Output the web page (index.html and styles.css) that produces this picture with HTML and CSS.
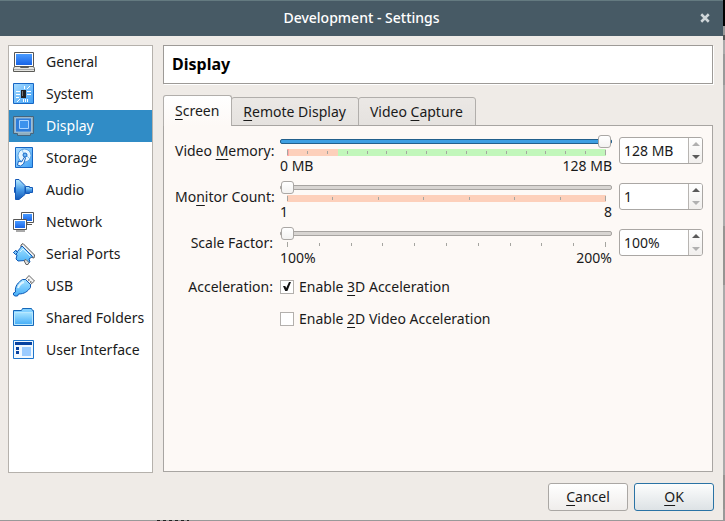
FILE: index.html
```html
<!DOCTYPE html>
<html lang="en">
<head>
<meta charset="utf-8">
<title>Development - Settings</title>
<link rel="stylesheet" href="styles.css">
</head>
<body>
<svg class="defs" aria-hidden="true">
  <defs>
    <linearGradient id="blue" x1="0" y1="0" x2="0" y2="1"><stop offset="0" stop-color="#4a9bff"/><stop offset="1" stop-color="#1763e6"/></linearGradient>
    <linearGradient id="sky" x1="0" y1="0" x2="1" y2="1"><stop offset="0" stop-color="#a8dcff"/><stop offset="1" stop-color="#3d9ff5"/></linearGradient>
    <linearGradient id="folder" x1="0" y1="0" x2="0" y2="1"><stop offset="0" stop-color="#a6e3ff"/><stop offset="1" stop-color="#45aef8"/></linearGradient>
    <linearGradient id="cone" x1="0" y1="0" x2="0" y2="1"><stop offset="0" stop-color="#b9ecff"/><stop offset=".5" stop-color="#4a9de8"/><stop offset="1" stop-color="#1459b8"/></linearGradient>
  </defs>
</svg>
<main class="dialog">
  <header class="titlebar">
    <h1>Development - Settings</h1>
    <button class="close" aria-label="Close"><svg viewBox="0 0 8 8"><path d="M1 1l6 6M7 1L1 7"/></svg></button>
  </header>
  <div class="content">
    <nav class="sidebar">
      <a href="#general"><svg viewBox="0 0 22 22"><path d="M1.5 1.5h19v14h-19z" fill="#fff" stroke="#555"/><path d="M3 3h16v11H3z" fill="url(#blue)"/><path d="M1.5 15.5h5l1 1h8l1-1h4l1 2v3H.5v-3z" fill="#e4e4e0" stroke="#5c5c58"/><path d="M1 18.5h20" stroke="#aaa"/></svg>General</a>
      <a href="#system"><svg viewBox="0 0 22 22"><path d="M.5.5h20v20H.5z" fill="url(#sky)" stroke="#1766c4"/><path d="M8 7h5v8H8z" fill="#222"/><path d="M9 8h1v5H9z" fill="#777"/><path d="M3 8.500h4M3 11.500h4M3 14.500h3M14 8.500h4M14 11.500h4M10.500 16v3M12.500 16v3M14.500 16v3M11.500 3v3M14 6l3-3M4 19l3-3" stroke="#fff" fill="none"/></svg>System</a>
      <a href="#display" class="current" aria-current="page"><svg viewBox="0 0 22 22"><path d="M.500 1.500h20v17h-3v2h-13v-2h-4z" fill="#8faec0" stroke="#46657c"/><path d="M2.500 3h16v14h-16z" fill="#2f7dd9" stroke="#b5d0e2" stroke-width=".7"/><path d="M6.500 5.500h9v8h-9z" fill="#3b92ed" stroke="#a8d4ff"/></svg>Display</a>
      <a href="#storage"><svg viewBox="0 0 22 22"><path d="M2.500.500h17v20h-17z" fill="url(#sky)" stroke="#1766c4"/><circle cx="11.500" cy="8.500" r="6.500" fill="#e5f5ff" stroke="#5aa2e2"/><path d="M9 3l2 4M14 9l3 3" stroke="#86c4f4"/><circle cx="12" cy="8" r="2" fill="#6eb8f5" stroke="#1766c4"/><path d="M4.500 18l1-4 3 1 3-5 1 1-2 6-3 2z" fill="#fff" stroke="#1766c4"/></svg>Storage</a>
      <a href="#audio"><svg viewBox="0 0 22 22"><path d="M1.500 8.500h2v5h-2z" fill="#72baf5" stroke="#1459b8"/><path d="M2.500.500H6l6 6v9l-6 5H2.500z" fill="url(#cone)" stroke="#1459b8"/><path d="M12.500 7.500h4v1h3v5h-3v1h-4z" fill="url(#cone)" stroke="#1459b8"/></svg>Audio</a>
      <a href="#network"><svg viewBox="0 0 22 22"><path d="M8.500 1.500h12v10h-12zM14 11.500v2h5" fill="#fff" stroke="#555"/><path d="M10 3h9v7h-9z" fill="url(#blue)"/><path d="M.500 8.500h13v10H.500z" fill="#fff" stroke="#555"/><path d="M2 10h10v7H2z" fill="url(#blue)"/><path d="M3 20h9" stroke="#555"/></svg>Network</a>
      <a href="#serial"><svg viewBox="0 0 22 22"><path d="M8 2l2-1.500L21.500 12l-.5 3-2-.5L8 4z" fill="#eee" stroke="#555"/><path d="M.500 9.500l2-2 2 1L9 3l10.500 10.500L16 16l1 3-2 1.500-3-3-7 .5-2-2 1-4z" fill="url(#folder)" stroke="#0d58b5"/><path d="M7 9l3-3 7 7" stroke="#d5f1ff" fill="none"/><path d="M.500 9.500l2-2 2 2-2 2z" fill="#7cc4f8" stroke="#0d58b5"/><path d="M11 17.500l2-1 3 3-1 2h-2z" fill="#ddd" stroke="#666"/></svg>Serial Ports</a>
      <a href="#usb"><svg viewBox="0 0 22 22"><path d="M12 5l4-4.500 5.500 5.500L17 10z" fill="#f4f4f4" stroke="#666"/><path d="M15 5h1.500M17 7h1.500" stroke="#222"/><path d="M.500 20v-2l2-1c-1-6 3-10 7-12.500h3l5 5v3c-3 4-6 6.500-12 6.500l-1 2H2z" fill="url(#folder)" stroke="#0d58b5"/><path d="M5 13c1-3 3-5 6-6" stroke="#dff4ff" stroke-width="2" fill="none"/></svg>USB</a>
      <a href="#folders"><svg viewBox="0 0 22 22"><path d="M.500 3.500h8l1-2h9l1 2h1v15H.500z" fill="#82d0ff" stroke="#1667b8"/><path d="M1.500 5.500h18v12h-18z" fill="url(#folder)" stroke="#b8e8ff"/></svg>Shared Folders</a>
      <a href="#interface"><svg viewBox="0 0 22 22"><path d="M.500 1.500h20v18H.500z" fill="#f0f8ff" stroke="#1d74cb"/><path d="M2 3h17v3H2z" fill="#0742a0"/><path d="M3 8h3v3H3zM3 12h3v3H3z" fill="#0742a0"/><path d="M9 8h9v9H9z" fill="#9acbff"/></svg>User Interface</a>
    </nav>
    <section class="page">
      <h2>Display</h2>
      <div class="tabs" role="tablist">
        <button role="tab" class="tab active" aria-selected="true"><u>S</u>creen</button>
        <button role="tab" class="tab" aria-selected="false"><u>R</u>emote Display</button>
        <button role="tab" class="tab" aria-selected="false">Video <u>C</u>apture</button>
      </div>
      <div class="pane" role="tabpanel">
        <label class="name" for="vm">Video <u>M</u>emory:</label>
        <div class="scale">
          <input class="slider full" type="range" id="vm" min="0" max="128" value="128">
          <div class="band memory"><i></i><i></i><i></i><i></i><i></i><i></i><i></i><i></i><i></i><i></i><i></i><i></i><i></i><i></i><i></i><i></i><i></i></div>
          <div class="limits"><span>0 MB</span><span>128 MB</span></div>
        </div>
        <div class="spin">
          <input type="text" value="128 MB" aria-label="Video memory value">
          <div class="steps"><button class="up off" aria-label="Increase memory"></button><button class="down" aria-label="Decrease memory"></button></div>
        </div>
        <label class="name" for="mc">Mo<u>n</u>itor Count:</label>
        <div class="scale">
          <input class="slider" type="range" id="mc" min="1" max="8" value="1">
          <div class="band monitors"><i></i><i></i><i></i><i></i><i></i><i></i><i></i><i></i></div>
          <div class="limits"><span>1</span><span>8</span></div>
        </div>
        <div class="spin">
          <input type="text" value="1" aria-label="Monitor count value">
          <div class="steps"><button class="up" aria-label="Increase monitors"></button><button class="down off" aria-label="Decrease monitors"></button></div>
        </div>
        <label class="name" for="sf">Scale Factor:</label>
        <div class="scale">
          <input class="slider" type="range" id="sf" min="100" max="200" value="100">
          <div class="band"><i></i><i></i><i></i><i></i><i></i><i></i><i></i><i></i><i></i><i></i><i></i></div>
          <div class="limits"><span>100%</span><span>200%</span></div>
        </div>
        <div class="spin">
          <input type="text" value="100%" aria-label="Scale factor value">
          <div class="steps"><button class="up" aria-label="Increase scale"></button><button class="down off" aria-label="Decrease scale"></button></div>
        </div>
        <span class="name group">Acceleration:</span>
        <div class="checks">
          <label><input type="checkbox" checked><span>Enable <u>3</u>D Acceleration</span></label>
          <label><input type="checkbox"><span>Enable <u>2</u>D Video Acceleration</span></label>
        </div>
      </div>
    </section>
  </div>
  <footer class="actions">
    <button class="btn"><u>C</u>ancel</button>
    <button class="btn primary"><u>O</u>K</button>
  </footer>
</main>
</body>
</html>
```
FILE: styles.css
```css
* { box-sizing: border-box; }

body {
  margin: 0;
  min-height: 100vh;
  display: flex;
  padding: 0 2px 1px 0;
  background:
    repeating-linear-gradient(90deg, #222 0 3px, #999 3px 6px) 157px 100% / 32px 1px no-repeat,
    linear-gradient(#000 0 26px, #999 26px 35px, #555 35px 40px, #aaa 40px 54px, #999 54px 85px, #aaa 85px 226px, #969492 226px 285px, #aaa 285px 475px, #969492 475px 509px, #999 509px);
  font-family: "Noto Sans", sans-serif;
  font-size: 14px;
  line-height: 20px;
  color: #1a1a1a;
}

button, input { font: inherit; color: inherit; }
u { text-decoration: underline; text-decoration-thickness: 1px; text-underline-offset: 3px; text-decoration-skip-ink: none; }
.defs { position: absolute; width: 0; height: 0; }

.dialog { flex: 1; display: flex; flex-direction: column; background: #efebe7; }

.titlebar {
  display: grid;
  grid-template-columns: 36px 1fr 36px;
  align-items: center;
  height: 36px;
  padding-bottom: 2px;
  background: #475a65;
  border-top: 1px solid #647a80;
  color: #fff;
}
.titlebar h1 { grid-column: 2; margin: 0; font-size: 14px; font-weight: 500; text-align: center; }
.close { display: grid; place-items: center; height: 33px; padding: 0; border: 0; background: none; }
.close svg { width: 10px; height: 10px; stroke: #cfd6d9; stroke-width: 2; fill: none; }

.content { flex: 1; display: flex; gap: 10px; padding: 9px 9px 0 8px; }

.sidebar { width: 145px; background: #fff; border: 1px solid #b5b1ac; }
.sidebar a {
  display: flex;
  align-items: center;
  gap: 11px;
  height: 32px;
  padding-left: 4px;
  color: inherit;
  text-decoration: none;
  white-space: nowrap;
}
.sidebar a.current { background: #308cc6; color: #fff; }
.sidebar svg { width: 22px; height: 22px; flex: none; }

.page { flex: 1; display: flex; flex-direction: column; padding: 0 1px 1px 0; }
.page h2 {
  margin: 0 0 11px;
  padding: 0 8px;
  font-size: 16px;
  line-height: 37px;
  background: #fff;
  border: 1px solid #9d9a97;
  box-shadow: 1px 1px #fff;
  color: #000;
}

.tabs { display: flex; align-items: flex-end; margin-bottom: -1px; }
.tab {
  height: 29px;
  padding: 0 12px 0 11px;
  margin-left: -1px;
  border: 1px solid #b1aeab;
  border-radius: 3px 3px 0 0;
  background: linear-gradient(#ebe8e5, #e5e2df);
}
.tab.active {
  position: relative;
  height: 31px;
  margin-left: 0;
  border-bottom: 0;
  background: linear-gradient(#fff, #fdf9f6);
}

.pane {
  flex: 1;
  display: grid;
  grid-template-columns: 98px 1fr 84px;
  grid-auto-rows: max-content;
  gap: 5px 7px;
  align-items: start;
  padding: 9px 9px 9px 11px;
  background: #fdf9f6;
  border: 1px solid #a8a5a2;
}
.name { text-align: right; line-height: 27px; margin-top: 2px; white-space: nowrap; }
.name.group { margin-top: 0; }

.scale { display: flex; flex-direction: column; }
.slider { appearance: none; width: 100%; height: 13px; margin: 0 0 1px; background: none; }
.slider::-webkit-slider-runnable-track {
  height: 5px;
  border: 1px solid #a7a4a1;
  border-radius: 2px;
  background: #d8d5d2;
}
.slider.full::-webkit-slider-runnable-track { border-color: #23608c; background: #3d9fe2; }
.slider::-webkit-slider-thumb {
  appearance: none;
  width: 13px;
  height: 13px;
  margin-top: -5px;
  border: 1px solid #aaa7a4;
  border-radius: 3px;
  background: linear-gradient(#fff, #f3f2f1);
}
.band { display: flex; justify-content: space-between; align-items: center; height: 7px; margin: 0 6px 0 7px; }
.band i { width: 1px; height: 3px; background: #a5a5a0; }
.band i:first-child, .band i:last-child { height: 5px; }
.memory { background: linear-gradient(90deg, #ffaaa8 0 2px, #fdd0bb 2px 16%, #c2f7bb 16%); }
.monitors { background: #fdd0bb; }
.limits { display: flex; justify-content: space-between; }

.spin {
  display: flex;
  height: 27px;
  margin-top: 2px;
  border: 1px solid #aaa7a4;
  border-radius: 3px;
  background: #fff;
  overflow: hidden;
}
.spin input { flex: 1; min-width: 0; padding: 0 0 0 4px; border: 0; background: none; outline: none; }
.steps { display: flex; flex-direction: column; width: 14px; border-left: 1px solid #b8b5b2; background: linear-gradient(#fff, #f1efed); }
.steps button { flex: 1; display: grid; place-items: center; padding: 0; border: 0; background: none; }
.steps button::before { content: ""; border: 4px solid transparent; }
.steps .up::before { border-top: 0; border-bottom-color: #5a5a5a; }
.steps .down::before { border-bottom: 0; border-top-color: #5a5a5a; }
.steps .up.off::before { border-bottom-color: #b0b0b0; }
.steps .down.off::before { border-top-color: #b0b0b0; }

.checks { grid-column: 2 / -1; display: grid; gap: 5px; }
.checks label { display: flex; align-items: center; gap: 5px; height: 27px; }
.checks input {
  appearance: none;
  display: grid;
  place-items: center;
  width: 14px;
  height: 14px;
  margin: 0;
  border: 1px solid #b3b0ad;
  background: #fff;
}
.checks input:checked::before {
  content: "";
  width: 8px;
  height: 9px;
  background: #111;
  clip-path: polygon(0 45%, 28% 45%, 40% 68%, 75% 0, 100% 0, 55% 100%, 28% 100%);
}

.actions { display: flex; justify-content: flex-end; gap: 6px; padding: 10px 9px 9px; }
.btn {
  width: 80px;
  height: 28px;
  padding: 0;
  border: 1px solid #aaa7a4;
  border-radius: 3px;
  background: linear-gradient(#fff, #efedeb);
}
.btn.primary { border-color: #2a73a5; background: linear-gradient(#fcfdfd, #dde2e5); }
```
